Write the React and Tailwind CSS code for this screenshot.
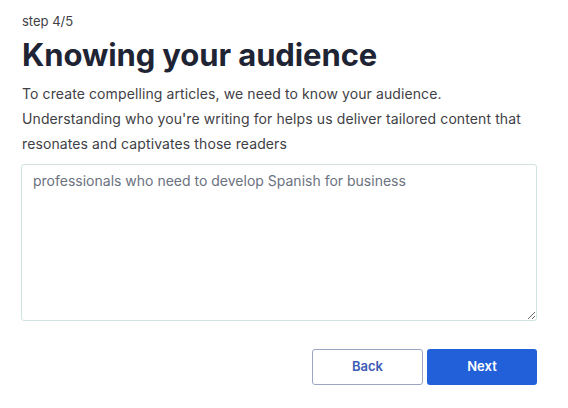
export default function App() {
    return (
        <div className="w-[568px] h-[408px] bg-white px-[22px] pt-[12px]" style={{ fontFamily: "Inter, 'Noto Sans', sans-serif" }}>
            <div className="text-[13px] leading-[18px] text-[#3f3f46]">step 4/5</div>
            <h1 className="mt-[6px] text-[31px] leading-[37px] font-bold text-[#1e2433] tracking-[-0.1px]">Knowing your audience</h1>
            <p className="mt-[8px] text-[14px] leading-[25px] text-[#3f3f46] tracking-[0.1px]">
                To create compelling articles, we need to know your audience.
                <br />
                Understanding who you're writing for helps us deliver tailored content that
                <br />
                resonates and captivates those readers
            </p>
            <textarea
                className="mt-[8px] block w-[516px] h-[157px] -ml-px border border-[#cfe3e3] rounded-[3px] px-[11px] py-[6px] text-[14px] leading-[20px] text-[#6b7280] outline-none"
                defaultValue="professionals who need to develop Spanish for business"
            />
            <div className="mt-[28px] flex justify-end gap-[4px] pr-[9px]">
                <button className="w-[111px] h-[36px] rounded-[3px] border border-[#9aa6c4] bg-white text-[13px] font-semibold text-[#3b5bb5]">
                    Back
                </button>
                <button className="w-[110px] h-[36px] rounded-[3px] bg-[#2160d8] text-[13px] font-semibold text-white">
                    Next
                </button>
            </div>
        </div>
    );
}
